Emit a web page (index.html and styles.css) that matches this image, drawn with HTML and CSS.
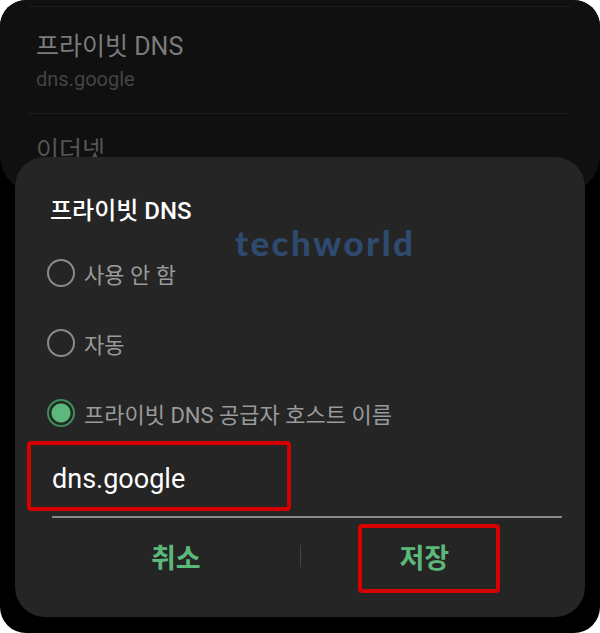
FILE: index.html
```html
<!DOCTYPE html>
<html lang="ko">
<head>
	<meta charset="utf-8">
	<title>프라이빗 DNS</title>
	<link rel="stylesheet" href="styles.css">
</head>
<body>
<div class="phone">
	<!-- settings list behind the dialog -->
	<div class="settings">
		<div class="divider"></div>
		<div class="item">
			<div class="item-title">프라이빗 DNS</div>
			<div class="item-sub">dns.google</div>
		</div>
		<div class="divider"></div>
		<div class="item next">
			<div class="item-title dim">이더넷</div>
		</div>
	</div>

	<div class="dialog">
		<div class="watermark">techworld</div>
		<h1 class="dialog-title">프라이빗 DNS</h1>

		<div class="options">
			<label class="option">
				<span class="radio"></span>
				<span class="option-text">사용 안 함</span>
			</label>
			<label class="option">
				<span class="radio"></span>
				<span class="option-text">자동</span>
			</label>
			<label class="option">
				<span class="radio checked"></span>
				<span class="option-text">프라이빗 DNS 공급자 호스트 이름</span>
			</label>
		</div>

		<div class="host">
			<div class="host-box mark">dns.google</div>
		</div>
		<div class="host-line"></div>

		<div class="buttons">
			<div class="btn-cell"><button class="btn">취소</button></div>
			<div class="btn-sep"></div>
			<div class="btn-cell"><button class="btn save mark">저장</button></div>
		</div>
	</div>
</div>
</body>
</html>
```

FILE: styles.css
```css
body{
	margin: 0;
	background: #fff;
	font-family: Roboto, "Noto Sans CJK KR", sans-serif;
}
.phone{
	width: 600px;
	height: 633px;
	background: #000;
	border-radius: 26px;
	overflow: hidden;
}

/* settings list */
.settings{
	height: 195px;
	padding-top: 6px;
	box-sizing: border-box;
	background: #101010;
	border-radius: 26px 26px 40px 40px;
}
.divider{
	height: 1px;
	margin: 0 30px 0 29px;
	background: #1d1d1d;
}
.item{
	padding: 25px 36px 21px;
}
.item.next{
	padding-top: 22px;
}
.item-title{
	font-size: 25px;
	line-height: 30px;
	color: #7b7b7b;
}
.item-title.dim{
	color: #555;
}
.item-sub{
	margin-top: 4px;
	font-size: 20px;
	line-height: 26px;
	color: #444;
}

/* dialog */
.dialog{
	position: relative;
	margin: -38px 15px 0;
	height: 460px;
	padding-top: 39px;
	box-sizing: border-box;
	background: #252525;
	border-radius: 30px;
}
.watermark{
	position: absolute;
	left: 220px;
	top: 66px;
	font-family: Lato, sans-serif;
	font-weight: 900;
	font-size: 35px;
	line-height: 38px;
	letter-spacing: 2.4px;
	color: #2f4a6f;
}
.dialog-title{
	margin: 0 0 0 35px;
	font-size: 24px;
	line-height: 30px;
	font-weight: 500;
	color: #fff;
}
.options{
	margin-top: 12px;
}
.option{
	display: flex;
	align-items: center;
	height: 70px;
	padding-left: 32px;
}
.radio{
	width: 24px;
	height: 24px;
	border: 2px solid #8a8a8a;
	border-radius: 50%;
	box-sizing: content-box;
	margin-right: 9px;
}
.radio.checked{
	border-color: #3f8c5b;
	background: radial-gradient(circle, #5cb97b 0 9px, #1f2a22 10px 11px, transparent 11.5px);
}
.option-text{
	font-size: 22px;
	color: #9a9a9a;
}

/* host name field */
.host{
	margin-top: -7px;
	padding-left: 12px;
}
.host-box{
	width: 264px;
	height: 70px;
	box-sizing: border-box;
	display: flex;
	align-items: center;
	padding: 6px 0 0 21px;
	font-size: 27px;
	color: #fff;
}
.mark{
	border: 4px solid #d50000;
	border-radius: 4px;
}
.host-line{
	height: 2px;
	margin: 5px 23px 0 37px;
	background: #8a8a8a;
}

/* bottom buttons */
.buttons{
	display: grid;
	grid-template-columns: 1fr 1px 1fr;
	align-items: center;
	padding: 6px 37px 0;
}
.btn-cell{
	display: flex;
	justify-content: center;
}
.btn-sep{
	height: 22px;
	margin-top: -6px;
	background: #444;
}
.btn{
	font-family: inherit;
	font-size: 27px;
	font-weight: 700;
	color: #5cb87a;
	background: none;
	border: none;
	padding: 0 0 5px;
	height: 69px;
	outline: none;
}
.btn.save{
	width: 142px;
	margin-left: 10px;
	padding-right: 10px;
	border: 4px solid #d50000;
}
```
